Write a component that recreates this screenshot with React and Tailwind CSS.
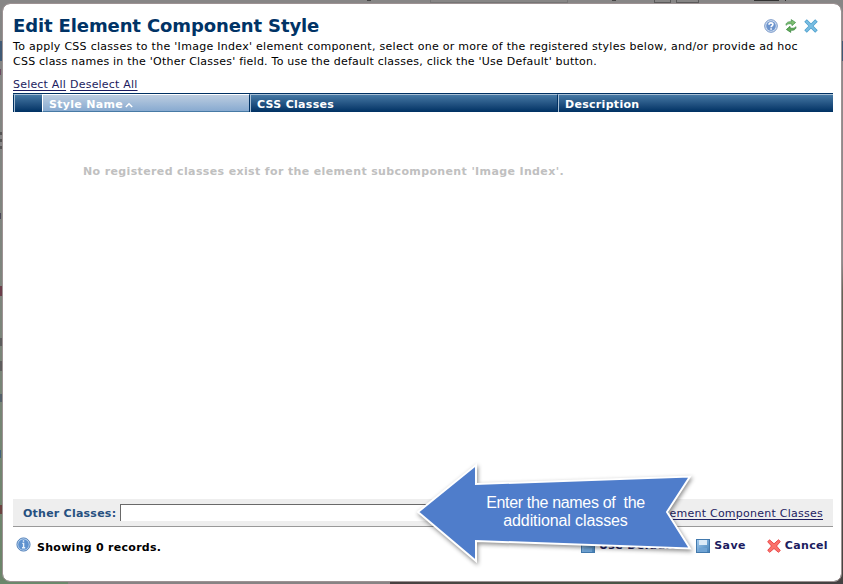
import React from "react";

const gloss = "bg-linear-to-b from-[#4a7da8] to-[#003163]";

function HelpIcon() {
  return (
    <svg width="14" height="14" viewBox="0 0 14 14">
      <circle cx="7" cy="7" r="6.3" fill="#d5e2f3" stroke="#7394c6" strokeWidth="1" />
      <circle cx="7" cy="7" r="4.8" fill="#6c94cd" />
      <path d="M5 5.700C5 3.200 9 3.300 8.900 5.500C8.800 6.900 7.100 6.800 7.100 8.300M7.100 9.300V10.700" fill="none" stroke="#fff" strokeWidth="1.600" />
    </svg>
  );
}

function RefreshIcon() {
  return (
    <svg width="12" height="14" viewBox="0 0 12 14">
      <path d="M1 6.300C.8 3.700 3 2.500 6.400 2.700L6.200.6L10.600 3.500L7 6.700L6.800 4.900C4.300 4.500 2.500 4.700 1 6.300Z" fill="#7fbf72" stroke="#3f8f47" strokeWidth=".7" />
      <path d="M11 7.700C11.200 10.300 9 11.500 5.600 11.300L5.800 13.400L1.400 10.500L5 7.300L5.200 9.100C7.700 9.500 9.500 9.300 11 7.700Z" fill="#62ad58" stroke="#33803b" strokeWidth=".7" />
    </svg>
  );
}

function CloseIcon() {
  return (
    <svg width="14" height="14" viewBox="0 0 14 14">
      <path d="M2.800 2.800L11.200 11.200M11.200 2.800L2.800 11.200" stroke="#4c9fcd" strokeWidth="3.600" strokeLinecap="square" />
      <path d="M2.800 2.800L11.200 11.200M11.200 2.800L2.800 11.200" stroke="#79bde2" strokeWidth="2.200" strokeLinecap="square" />
    </svg>
  );
}

function InfoIcon() {
  return (
    <svg width="15" height="15" viewBox="0 0 15 15">
      <circle cx="7.500" cy="7.500" r="6.600" fill="#b9d2ee" stroke="#4a7bb5" strokeWidth=".9" />
      <circle cx="7.500" cy="7.500" r="5.300" fill="#5e92cf" />
      <path d="M7.500 3.200V4.800M6.300 6.400H7.600V10.500M6 10.700H9.200" fill="none" stroke="#e9f2fb" strokeWidth="1.400" />
    </svg>
  );
}

function DiskIcon() {
  return (
    <svg className="relative -top-px" width="14" height="14" viewBox="0 0 14 14">
      <defs>
        <linearGradient id="disk" x1="0" y1="0" x2="1" y2="1">
          <stop offset="0" stopColor="#a5cdf0" />
          <stop offset="1" stopColor="#4380b8" />
        </linearGradient>
      </defs>
      <rect x=".5" y=".5" width="13" height="13" fill="url(#disk)" stroke="#4279ad" />
      <rect x="3" y="1" width="8" height="5" fill="#dcebf8" />
      <rect x="3" y="9" width="8" height="4" fill="#6fa3d4" />
    </svg>
  );
}

function CancelIcon() {
  return (
    <svg className="relative -top-px" width="14" height="14" viewBox="0 0 14 14">
      <path d="M2.500.8L7 4.800L11.500.8L13.300 2.500L9.500 7L13.300 11.500L11.400 13.300L7 9.500L2.700 13.300L.7 11.400L4.500 7L.7 2.800Z" fill="#fb716a" stroke="#e63c3e" strokeWidth=".9" />
    </svg>
  );
}

function Callout() {
  return (
    <div className="absolute left-[408px] top-[456px] h-[116px] w-[292px]">
      <svg className="absolute inset-0 drop-shadow-[1px_2px_2px_rgba(0,0,0,0.45)]" width="292" height="116" viewBox="0 0 292 116">
        <path d="M10 56L68 9V28L282 20.500L259 56L282 92.500L68 85V105Z" fill="#4f7dcb" stroke="#fff" strokeWidth="2" />
      </svg>
      <div className="relative ml-[68px] mt-[38px] w-[179px] whitespace-pre text-center font-['Liberation_Sans',sans-serif] text-[16px] leading-[18px] text-white">
        <span className="block tracking-[-0.33px]">{"Enter the names of  the"}</span>
        <span className="block tracking-[-0.1px]">additional classes</span>
      </div>
    </div>
  );
}

export default function App() {
  return (
    <div className="relative h-[584px] w-[843px] overflow-hidden bg-linear-to-b from-[#8f8a8b] from-45% via-[#666457] via-50% to-[#454240] font-['DejaVu_Sans',sans-serif] text-[11px] text-black">
      <div className="absolute left-0 top-0 h-full w-[12px] bg-linear-to-b from-[#858585] via-[#7e857d] to-[#6b8569]" />
      <div className="absolute left-0 top-0 h-[12px] w-full bg-[#878686]" />
      <div className="absolute bottom-0 left-0 flex h-[3px] w-full">
        <div className="w-[68px] bg-[#6b886c]" />
        <div className="w-[322px] bg-[#878384]" />
        <div className="flex-1 bg-linear-to-r from-[#484041] via-[#4a5546] to-[#444042]" />
      </div>
      <div className="absolute left-0 top-[41px] h-[20px] w-[2px] bg-[#405a75]" />
      <div className="absolute left-0 top-[69px] h-[6px] w-px bg-[#6b4a62]" />
      <div className="absolute left-0 top-[132px] h-[18px] w-[2px] bg-[repeating-linear-gradient(#555_0_3px,#858585_3px_7px)]" />
      <div className="absolute left-0 top-[213px] h-[6px] w-px bg-[#4b4858]" />
      <div className="absolute left-0 top-[286px] h-[10px] w-[2px] bg-[#6b3f4b]" />
      <div className="absolute left-0 top-[338px] h-[8px] w-[2px] bg-[#5d5d5d]" />
      <div className="absolute left-0 top-[361px] h-[10px] w-[2px] bg-[#5d5d5d]" />
      <div className="absolute left-0 top-[394px] h-[8px] w-[2px] bg-[#54616a]" />
      <div className="absolute left-0 top-[450px] h-[8px] w-px bg-[#42627a]" />
      <div className="absolute left-0 top-[505px] h-[9px] w-[2px] bg-[#6b4440]" />
      <div className="absolute left-[842px] top-[41px] h-[20px] w-px bg-[#405a75]" />
      <div className="absolute left-[367px] top-0 h-px w-[4px] bg-[#454545]" />
      <div className="absolute left-[612px] top-0 h-px w-[4px] bg-[#454545]" />
      <div className="absolute left-[430px] top-0 h-[3px] w-[138px] border border-t-0 border-[#757575]" />
      <div className="absolute left-[654px] top-0 h-[3px] w-[17px] border border-t-0 border-[#5a5a5a]" />
      <div className="absolute left-[676px] top-0 h-[3px] w-[23px] border border-t-0 border-[#5a5a5a]" />
      <div className="absolute left-[754px] top-0 h-px w-[25px] bg-[#333]" />
      <div className="absolute left-[785px] top-0 h-px w-px bg-[#333]" />

      <div className="relative flex h-[582px] flex-col pl-[3px] pr-[2px] pt-1">
        <div className="flex h-[577px] flex-col rounded-[7px] bg-white pl-[10px] pr-[8px] outline outline-[#9d9293]">
          <header className="flex h-[34px] items-start justify-between">
            <h1 className="mt-[10px] whitespace-nowrap text-[18px] font-bold leading-[24px] tracking-[-0.12px] text-[#003366]">Edit Element Component Style</h1>
            <div className="mr-[15px] mt-[15px] flex items-center gap-[7px]">
              <HelpIcon />
              <RefreshIcon />
              <CloseIcon />
            </div>
          </header>
          <p className="mt-px h-[30px] whitespace-pre leading-[15px]">
            <span className="block tracking-[0.283px]">To apply CSS classes to the 'Image Index' element component, select one or more of the registered styles below, and/or provide ad hoc</span>
            <span className="block tracking-[0.232px]">CSS class names in the 'Other Classes' field. To use the default classes, click the 'Use Default' button.</span>
          </p>
          <nav className="mt-[9px] flex h-[15px] gap-[4px] leading-[14px] tracking-[0.2px] text-[#1c1c60]">
            <a className="underline underline-offset-2">Select All</a>
            <a className="underline underline-offset-2">Deselect All</a>
          </nav>
          <div className={"flex h-[19px] border-t border-[#003163] font-bold leading-[20px] tracking-[0.3px] text-white " + gloss}>
            <div className="w-[29px] border-l border-t border-l-[#003163] border-t-[#a9c0d5] shadow-[inset_1px_0_0_#a9c0d5]" />
            <div className="flex w-[207px] items-start border-b border-l border-t border-b-[#477aa5] border-l-white border-t-white bg-linear-to-b from-[#bccde0] to-[#88aad0] pl-[6px] leading-[19px]">
              Style Name
              <svg className="ml-[2px] mt-[7px]" width="8" height="6" viewBox="0 0 8 6">
                <path d="M.8 5L4 1.800L7.200 5" fill="none" stroke="#fff" strokeWidth="1.500" />
              </svg>
            </div>
            <div className="w-[308px] border-l border-t border-l-[#003163] border-t-[#a9c0d5] pl-[7px] leading-[19px] shadow-[inset_1px_0_0_#a9c0d5]">CSS Classes</div>
            <div className="flex-1 border-l border-t border-l-[#003163] border-t-[#a9c0d5] pl-[7px] leading-[19px] shadow-[inset_1px_0_0_#a9c0d5]">Description</div>
          </div>
          <main className="h-[387px] whitespace-nowrap pl-[70px] pt-[52px] font-bold leading-[16px] tracking-[0.366px] text-[#c0c0c0]">
            No registered classes exist for the element subcomponent 'Image Index'.
          </main>
          <div className="flex h-[28px] items-center border-b border-[#999] bg-[#eee] pl-[10px] pr-[10px]">
            <label className="w-[97px] whitespace-nowrap pt-[3px] font-bold tracking-[0.24px] text-[#265080]">Other Classes:</label>
            <div className="h-[17px] w-[310px] border-l border-t border-[#696969] bg-white" />
            <a className="ml-auto whitespace-nowrap pt-[3px] tracking-[0.25px] text-[#1c1c60] underline underline-offset-2">Element Component Classes</a>
          </div>
          <footer className="flex h-[40px] items-center pl-[3px] pr-[5px] font-bold">
            <div className="-mt-[6px]"><InfoIcon /></div>
            <span className="ml-[6px] pt-[2px] tracking-[0.28px]">Showing 0 records.</span>
            <div className="-mt-px ml-auto flex gap-[21px] tracking-[0.36px] text-[#1c1c60]">
              <span className="flex items-center gap-[4px]"><DiskIcon />Use Default</span>
              <span className="flex items-center gap-[4px]"><DiskIcon />Save</span>
              <span className="flex items-center gap-[4px]"><CancelIcon />Cancel</span>
            </div>
          </footer>
        </div>
      </div>
      <Callout />
    </div>
  );
}
